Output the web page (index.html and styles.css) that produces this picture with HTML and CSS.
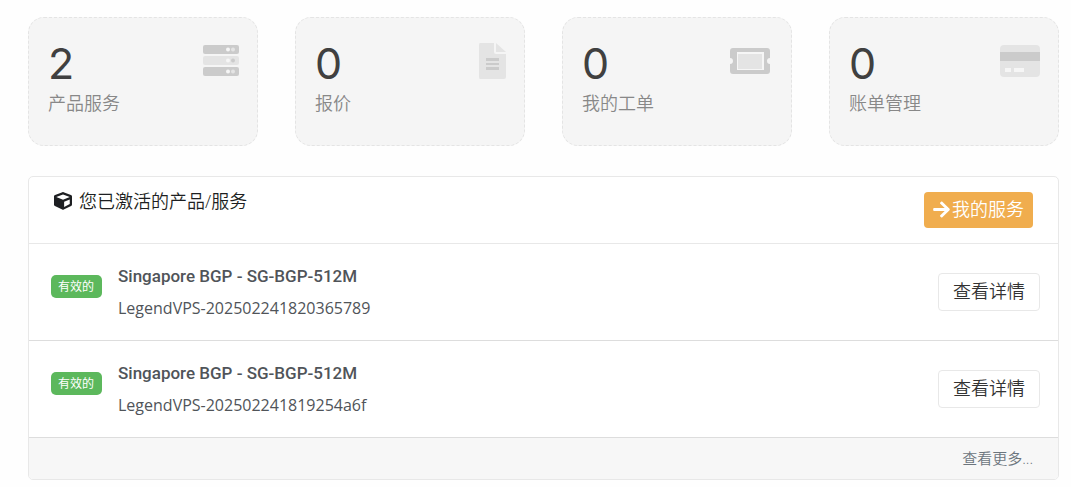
FILE: index.html
```html
<!DOCTYPE html>
<html lang="zh-CN">
<head>
    <meta charset="UTF-8">
    <meta name="viewport" content="width=device-width, initial-scale=1.0">
    <title>客户中心</title>
    <link rel="stylesheet" href="styles.css">
</head>
<body>
    <!-- Stat tiles -->
    <div class="tiles">
        <a class="tile" href="#services">
            <div>
                <div class="stat">2</div>
                <div class="title">产品服务</div>
            </div>
            <svg class="tile-icon" viewBox="-5 0 44 40">
                <rect class="dark" x="2" y="4" width="36" height="9" rx="2"/>
                <rect class="light" x="2" y="15" width="36" height="9" rx="2"/>
                <rect class="dark" x="2" y="26" width="36" height="9" rx="2"/>
                <circle class="hole" cx="27" cy="8.500" r="2"/>
                <circle class="light" cx="32" cy="8.500" r="2"/>
                <circle class="hole" cx="27" cy="19.500" r="2"/>
                <circle class="dark" cx="32" cy="19.500" r="2"/>
                <circle class="hole" cx="27" cy="30.500" r="2"/>
                <circle class="light" cx="32" cy="30.500" r="2"/>
            </svg>
        </a>
        <a class="tile" href="#quotes">
            <div>
                <div class="stat">0</div>
                <div class="title">报价</div>
            </div>
            <svg class="tile-icon" viewBox="-5 0 44 40">
                <path class="light" d="M12 2h14v9q0 2 2 2h10v23q0 2-2 2H12q-1 0-1-2V4q0-2 1-2z"/>
                <path class="light" d="M28 2l10 9H28z"/>
                <path class="dark" d="M18 17h13v3H18zM18 22h13v2H18zM18 26h13v3H18z"/>
            </svg>
        </a>
        <a class="tile" href="#tickets">
            <div>
                <div class="stat">0</div>
                <div class="title">我的工单</div>
            </div>
            <svg class="tile-icon" viewBox="0 0 44 40">
                <path class="dark" fill-rule="evenodd" d="M3 7h34q3 0 3 3v7a3 3 0 0 0 0 6v7q0 3-3 3H3q-3 0-3-3v-7a3 3 0 0 0 0-6v-7q0-3 3-3z"/>
                <rect class="hole" x="7" y="11" width="27" height="18"/>
                <rect class="light" x="8" y="13" width="24" height="15"/>
            </svg>
        </a>
        <a class="tile" href="#invoices">
            <div>
                <div class="stat">0</div>
                <div class="title">账单管理</div>
            </div>
            <svg class="tile-icon" viewBox="-3 0 44 40">
                <rect class="light" x="0" y="4" width="40" height="32" rx="4"/>
                <rect class="dark" x="0" y="11" width="40" height="9"/>
                <path class="hole" d="M5 27h6v4H5zM14 27h10v4H14z"/>
            </svg>
        </a>
    </div>

    <!-- Active services -->
    <div class="panel">
        <div class="panel-header">
            <h3 class="panel-title">
                <svg class="cube" viewBox="0 0 512 512"><path d="M239.1 6.3l-208 78c-18.700 7-31.100 25-31.100 45v225.100c0 18.200 10.300 34.800 26.500 42.900l208 104c13.500 6.800 29.400 6.800 42.900 0l208-104c16.300-8.100 26.500-24.800 26.500-42.900V129.300c0-20-12.400-37.900-31.100-44.900l-208-78C262 2.200 250 2.200 239.100 6.300zM256 68.400l192 72v1.100l-192 78-192-78v-1.100l192-72zm32 356V275.500l160-65v133.900l-160 80z"/></svg>
                您已激活的产品/服务
            </h3>
            <a class="btn btn-warning" href="#services">
                <svg class="arrow" viewBox="0 0 448 512"><path d="M190.500 66.900l22.200-22.200c9.400-9.400 24.600-9.400 33.900 0L441 239c9.400 9.400 9.400 24.600 0 33.900L246.600 467.300c-9.400 9.400-24.600 9.400-33.900 0l-22.200-22.200c-9.500-9.500-9.300-25 .4-34.300L311.400 296H24c-13.300 0-24-10.700-24-24v-32c0-13.300 10.700-24 24-24h287.400L190.900 101.200c-9.800-9.300-10-24.800-.4-34.300z"/></svg>
                我的服务
            </a>
        </div>
        <div class="service">
            <span class="label">有效的</span>
            <div class="service-info">
                <div class="service-name">Singapore BGP - SG-BGP-512M</div>
                <div class="service-domain">LegendVPS-202502241820365789</div>
            </div>
            <button class="btn btn-default" type="button">查看详情</button>
        </div>
        <div class="service">
            <span class="label">有效的</span>
            <div class="service-info">
                <div class="service-name">Singapore BGP - SG-BGP-512M</div>
                <div class="service-domain">LegendVPS-202502241819254a6f</div>
            </div>
            <button class="btn btn-default" type="button">查看详情</button>
        </div>
        <div class="panel-footer">
            <a href="#more">查看更多...</a>
        </div>
    </div>
</body>
</html>
```
FILE: styles.css
```css
* {
    box-sizing: border-box;
}
body {
    font-family: "Open Sans", "Noto Sans CJK SC", sans-serif;
    font-size: 16px;
    font-weight: 400;
    line-height: 24px;
    margin: 0;
    padding: 17px 12px 7px 28px;
    background: #fefefe;
    color: #505459;
}
a {
    color: inherit;
    text-decoration: none;
}
.tiles {
    display: grid;
    grid-template-columns: repeat(4, 1fr);
    gap: 37px;
    margin-bottom: 30px;
}
.tile {
    display: flex;
    justify-content: space-between;
    align-items: flex-start;
    padding: 23px 17px 28px 19px;
    background: #f5f5f5;
    border: 1px dashed #e4e4e4;
    border-radius: 16px;
}
.stat {
    margin-bottom: 4px;
    font-family: Inter, sans-serif;
    font-size: 43px;
    line-height: 44px;
    color: #404040;
}
.title {
    font-size: 18px;
    font-weight: 350;
    line-height: 28px;
    color: #888;
}
.tile-icon {
    width: 44px;
    height: 40px;
}
.dark {
    fill: #cbcbcb;
}
.light {
    fill: #e4e4e4;
}
.hole {
    fill: #f6f6f6;
}
.panel {
    background: #fff;
    border: 1px solid #e8e8e8;
    border-radius: 5px;
    overflow: hidden;
}
.panel-header {
    display: flex;
    justify-content: space-between;
    align-items: flex-start;
    padding: 15px 25px;
    border-bottom: 1px solid #e8e8e8;
}
.panel-title {
    display: flex;
    align-items: center;
    gap: 7px;
    margin: 0;
    font-size: 18px;
    font-weight: 350;
    line-height: 18px;
    color: #1d1f22;
}
.cube {
    width: 18px;
    height: 18px;
    fill: #1d1f22;
}
.btn {
    display: flex;
    align-items: center;
    border-radius: 4px;
    font-family: inherit;
    font-size: 18px;
    font-weight: 350;
    line-height: 34px;
}
.btn-warning {
    gap: 2px;
    padding: 0 9px 2px;
    background: #f0ad4e;
    color: #fff;
}
.arrow {
    width: 17px;
    height: 19px;
    fill: #fff;
}
.btn-default {
    padding: 0 14px 2px;
    background: #fff;
    border: 1px solid #e8e8e8;
    color: #333;
    cursor: pointer;
}
.service {
    display: flex;
    align-items: center;
    gap: 16px;
    padding: 16px 18px 16px 22px;
    border-bottom: 1px solid #ddd;
}
.label {
    align-self: flex-start;
    margin-top: 15px;
    padding: 0 8px 0 7px;
    background: #5cb85c;
    border-radius: 5px;
    font-size: 12px;
    line-height: 23px;
    color: #fff;
}
.service-info {
    flex: 1;
    line-height: 32px;
}
.service-name {
    font-family: Roboto, sans-serif;
    font-size: 17px;
    font-weight: 500;
}
.panel-footer {
    padding: 8px 25px 9px;
    background: #f7f7f7;
    font-size: 15px;
    font-weight: 350;
    text-align: right;
    color: #6c757d;
}
```
